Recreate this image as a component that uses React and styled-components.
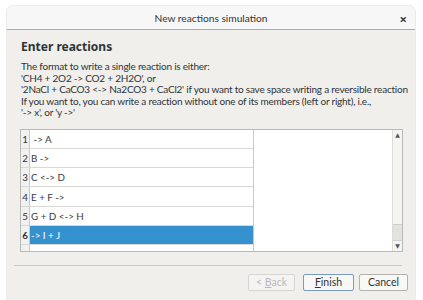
import React from 'react';
import styled, { createGlobalStyle } from 'styled-components';

const Global = createGlobalStyle`
    html, body {
        margin: 0;
        padding: 0;
        background: #ffffff;
        font-family: Lato, 'Noto Sans', sans-serif;
    }
`;

const Page = styled.div`
    width: 423px;
    height: 300px;
    overflow: hidden;
    padding: 6px 8px 0 7px;
    box-sizing: border-box;
`;

const Window = styled.div`
    width: 408px;
    height: 300px;
    border-radius: 6px 6px 0 0;
    overflow: hidden;
    background: #f1efeb;
    box-shadow: 0 0 0 1px rgba(0, 0, 0, 0.08);
`;

const TitleBar = styled.div`
    height: 23px;
    background: #f7f7f8;
    border-bottom: 1px solid #a9a9a7;
    display: flex;
    align-items: center;
    justify-content: center;
    position: relative;
    font-size: 10.2px;
    color: #2e3436;
`;

const Close = styled.span`
    position: absolute;
    right: 8px;
    top: 4px;
    font-family: 'Noto Sans', sans-serif;
    font-size: 13px;
    font-weight: bold;
    color: #3a3a3a;
`;

const Content = styled.div`
    padding: 8px 7px 0 14px;
`;

const Heading = styled.h1`
    margin: 0;
    font-family: 'Noto Sans', sans-serif;
    font-size: 12px;
    font-weight: bold;
    color: #2e3436;
    line-height: 18px;
`;

const Info = styled.p`
    margin: 5px 0 0 0;
    font-size: 10px;
    line-height: 11.5px;
    color: #2e3436;
    white-space: nowrap;
    letter-spacing: -0.22px;
`;

const TableBox = styled.div`
    margin: 10px 0 0 -1px;
    width: 383px;
    height: 123px;
    background: #ffffff;
    border: 1px solid #b9b9b7;
    box-sizing: border-box;
    display: flex;
    overflow: hidden;
`;

const Rows = styled.div`
    width: 232px;
    border-right: 1px solid #c8c8c6;
    display: flex;
    flex-direction: column;
`;

const Row = styled.div`
    display: flex;
    height: 19.3px;
    flex: none;
    border-bottom: 1px solid #d8d8d6;
    box-sizing: border-box;
    font-size: 9.8px;
`;

const Num = styled.div`
    width: 8px;
    flex: none;
    background: #f1f1f0;
    border-right: 1px solid #c8c8c6;
    display: flex;
    align-items: center;
    justify-content: center;
    color: #333;
    font-weight: ${(p) => (p.$active ? 'bold' : 'normal')};
`;

const Cell = styled.div`
    flex: 1;
    display: flex;
    align-items: center;
    padding-left: 1px;
    white-space: pre;
    background: ${(p) => (p.$active ? '#3592cf' : '#ffffff')};
    color: ${(p) => (p.$active ? '#ffffff' : '#3a3a3a')};
`;

const Empty = styled.div`
    flex: 1;
`;

const ScrollBar = styled.div`
    width: 9px;
    border-left: 1px solid #dcdcda;
    background: #f4f4f3;
    display: flex;
    flex-direction: column;
`;

const Arrow = styled.div`
    height: 10px;
    display: flex;
    align-items: center;
    justify-content: center;
    font-family: 'DejaVu Sans', sans-serif;
    font-size: 6px;
    color: #555;
`;

const Track = styled.div`
    flex: 1;
    display: flex;
    flex-direction: column;
    justify-content: flex-end;
`;

const Handle = styled.div`
    height: 15px;
    background: #e2e2e0;
    border-top: 1px solid #d0d0ce;
    border-bottom: 1px solid #d0d0ce;
`;

const Separator = styled.div`
    margin: 13px 6px 0 -7px;
    height: 1px;
    background: #cfcdc9;
`;

const Buttons = styled.div`
    display: flex;
    justify-content: flex-end;
    gap: 5px;
    margin-top: 8px;
`;

const Button = styled.button`
    width: ${(p) => p.$w}px;
    height: 17px;
    padding: 0;
    font-family: Lato, 'Noto Sans', sans-serif;
    font-size: 10.5px;
    background: ${(p) => (p.disabled ? '#f5f4f2' : '#f8f8f7')};
    color: ${(p) => (p.disabled ? '#b8b8b6' : '#2e3436')};
    border: 1px solid ${(p) => (p.$focus ? '#7a9ac4' : p.disabled ? '#d6d5d2' : '#b3b2ae')};
    border-radius: 2px;
    margin-left: ${(p) => p.$gap || 0}px;

    u {
        text-decoration: underline;
    }
`;

const reactions = [' -> A', 'B ->', 'C <-> D', 'E + F ->', 'G + D <-> H', '-> I + J', ''];

export default function App() {
    return (
        <Page>
            <Global />
            <Window>
                <TitleBar>
                    New reactions simulation
                    <Close>×</Close>
                </TitleBar>
                <Content>
                    <Heading>Enter reactions</Heading>
                    <Info>
                        The format to write a single reaction is either:
                        <br />
                        'CH4 + 2O2 -&gt; CO2 + 2H2O', or
                        <br />
                        '2NaCl + CaCO3 &lt;-&gt; Na2CO3 + CaCl2' if you want to save space writing a reversible reaction
                        <br />
                        If you want to, you can write a reaction without one of its members (left or right), i.e.,
                        <br />
                        '-&gt; x', or 'y -&gt;'
                    </Info>
                    <TableBox>
                        <Rows>
                            {reactions.map((r, i) => (
                                <Row key={i}>
                                    <Num $active={i === 5}>{i + 1}</Num>
                                    <Cell $active={i === 5}>{r}</Cell>
                                </Row>
                            ))}
                        </Rows>
                        <Empty />
                        <ScrollBar>
                            <Arrow>▲</Arrow>
                            <Track>
                                <Handle />
                            </Track>
                            <Arrow>▼</Arrow>
                        </ScrollBar>
                    </TableBox>
                    <Separator />
                    <Buttons>
                        <Button $w={47} disabled>
                            &lt; <u>B</u>ack
                        </Button>
                        <Button $w={51} $focus $gap={3}>
                            <u>F</u>inish
                        </Button>
                        <Button $w={49}>Cancel</Button>
                    </Buttons>
                </Content>
            </Window>
        </Page>
    );
}
